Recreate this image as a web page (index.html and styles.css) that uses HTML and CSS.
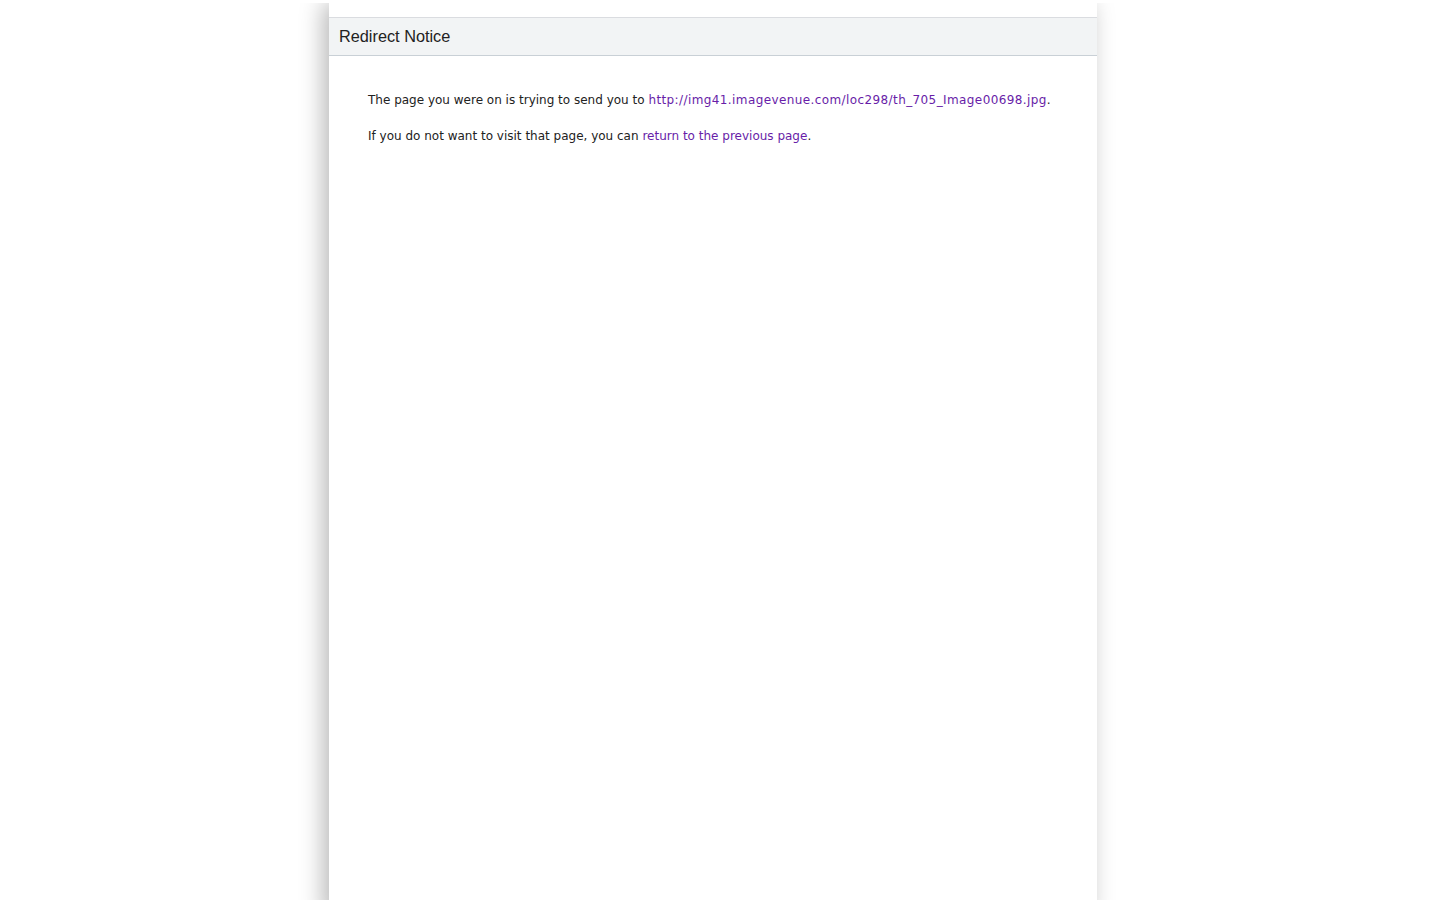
FILE: index.html
```html
<!DOCTYPE html>
<html lang="en">
<head>
    <meta charset="UTF-8">
    <title>Redirect Notice</title>
    <link rel="stylesheet" href="styles.css">
</head>
<body>
    <div class="page">
        <div class="notice-head">Redirect Notice</div>
        <div class="notice-body">
            <p>The page you were on is trying to send you to <a class="target" href="#">http://img41.imagevenue.com/loc298/th_705_Image00698.jpg</a>.</p>
            <p>If you do not want to visit that page, you can <a href="#">return to the previous page</a>.</p>
        </div>
    </div>
</body>
</html>
```

FILE: styles.css
```css
html, body {
    margin: 0;
    height: 100%;
    background: #fff;
}
body {
    font-family: "Liberation Sans", Arial, sans-serif;
    color: #222;
    overflow: hidden;
    padding-right: 14px; /* room where the scrollbar sits */
    box-sizing: border-box;
}
.page {
    width: 768px;
    min-height: 100%;
    margin: 3px auto 0;
    background: #fff;
    padding-top: 14px;
    box-shadow: -6px 0 22px rgba(0, 0, 0, 0.28);
    clip-path: inset(0 -60px 0 -60px); /* only the side shadows */
}
.notice-head {
    height: 37px;
    line-height: 37px;
    padding-left: 10px;
    font-size: 16.3px;
    color: #222;
    background: #f2f4f5;
    border-top: 1px solid #dadce0;
    border-bottom: 1px solid #c9d0d6;
}
.notice-body {
    padding: 36px 39px;
    font-family: "DejaVu Sans", Verdana, sans-serif;
    font-size: 12px;
}
.notice-body p {
    margin: 0 0 19px;
    line-height: 17px;
}
a {
    color: #681da8;
    text-decoration: none;
}
.target {
    letter-spacing: 0.4px;
}
```
